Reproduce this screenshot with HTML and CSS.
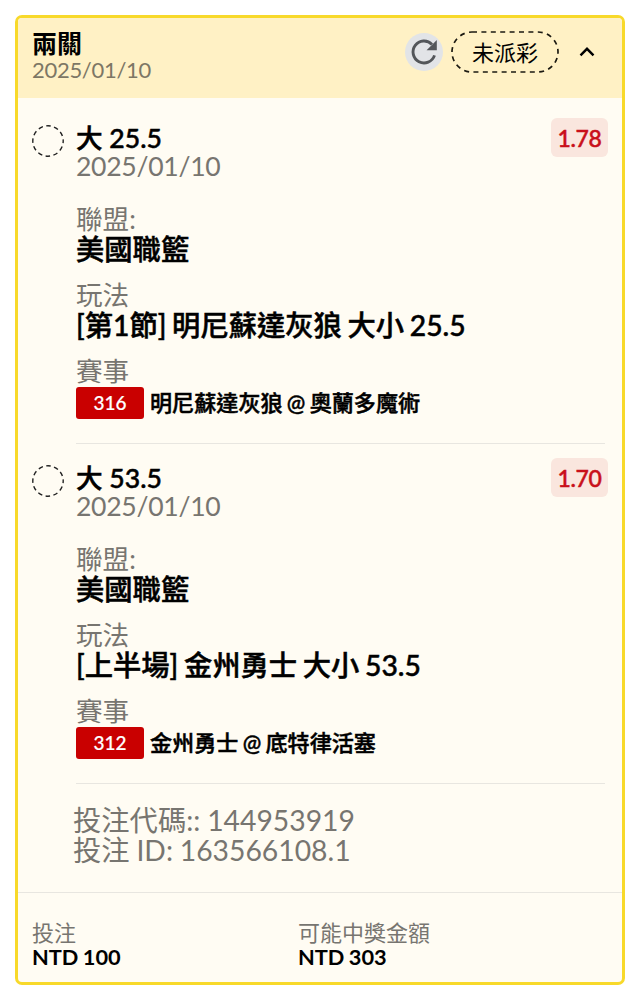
FILE: index.html
```
<!DOCTYPE html>
<html lang="zh-Hant">
<head>
    <meta charset="UTF-8">
    <meta name="viewport" content="width=device-width, initial-scale=1.0">
    <title>投注紀錄</title>
    <link rel="stylesheet" href="styles.css">
</head>
<body>
    <div class="card">
        <div class="card-header">
            <div class="header-text">
                <div class="header-title">兩關</div>
                <div class="header-date">2025/01/10</div>
            </div>
            <div class="header-actions">
                <svg class="refresh" viewBox="0 0 38 38">
                    <circle cx="19" cy="19" r="19" fill="#e2e4e7"/>
                    <path d="M27 11.4 A11 11 0 1 0 29.5 22.4" fill="none" stroke="#53565a" stroke-width="2.9"/>
                    <path d="M31.8 7 V17.2 H21.6 Z" fill="#53565a"/>
                </svg>
                <div class="status">
                    <svg class="status-outline" viewBox="0 0 108 42">
                        <rect x="1" y="1" width="106" height="40" rx="20" fill="none" stroke="#1c1a12" stroke-width="1.7" stroke-dasharray="5 4.4"/>
                    </svg>
                    <span>未派彩</span>
                </div>
                <svg class="chevron" viewBox="0 0 16 12">
                    <path d="M1.5 9.3 L8 2.8 L14.5 9.3" fill="none" stroke="#000" stroke-width="2.4"/>
                </svg>
            </div>
        </div>

        <div class="leg">
            <svg class="leg-status" viewBox="0 0 32 32">
                <circle cx="16" cy="16" r="15.2" fill="none" stroke="#222" stroke-width="1.4" stroke-dasharray="4.6 3.36" stroke-dashoffset="2.3"/>
            </svg>
            <div class="leg-body">
                <div class="leg-top">
                    <div>
                        <div class="pick">大 25.5</div>
                        <div class="leg-date">2025/01/10</div>
                    </div>
                    <div class="odds">1.78</div>
                </div>
                <div class="field">
                    <div class="label">聯盟:</div>
                    <div class="value">美國職籃</div>
                </div>
                <div class="field">
                    <div class="label">玩法</div>
                    <div class="value">[第1節] 明尼蘇達灰狼 大小 25.5</div>
                </div>
                <div class="field">
                    <div class="label">賽事</div>
                    <div class="match"><span class="match-id">316</span>明尼蘇達灰狼 @ 奧蘭多魔術</div>
                </div>
            </div>
        </div>

        <div class="leg">
            <svg class="leg-status" viewBox="0 0 32 32">
                <circle cx="16" cy="16" r="15.2" fill="none" stroke="#222" stroke-width="1.4" stroke-dasharray="4.6 3.36" stroke-dashoffset="2.3"/>
            </svg>
            <div class="leg-body">
                <div class="leg-top">
                    <div>
                        <div class="pick">大 53.5</div>
                        <div class="leg-date">2025/01/10</div>
                    </div>
                    <div class="odds">1.70</div>
                </div>
                <div class="field">
                    <div class="label">聯盟:</div>
                    <div class="value">美國職籃</div>
                </div>
                <div class="field">
                    <div class="label">玩法</div>
                    <div class="value">[上半場] 金州勇士 大小 53.5</div>
                </div>
                <div class="field">
                    <div class="label">賽事</div>
                    <div class="match"><span class="match-id">312</span>金州勇士 @ 底特律活塞</div>
                </div>
            </div>
        </div>

        <div class="codes">
            <div>投注代碼:: 144953919</div>
            <div>投注 ID: 163566108.1</div>
        </div>

        <div class="card-footer">
            <div class="total">
                <div class="total-label">投注</div>
                <div class="total-value">NTD 100</div>
            </div>
            <div class="total">
                <div class="total-label">可能中獎金額</div>
                <div class="total-value">NTD 303</div>
            </div>
        </div>
    </div>
</body>
</html>
```
FILE: styles.css
```
* {
    box-sizing: border-box;
}

body {
    margin: 0;
    padding: 15px 15px 14px;
    background: #fff;
    font-family: Lato, "Noto Sans CJK TC", sans-serif;
    color: #000;
}

.card {
    height: 970px;
    border: 3px solid #f8d92a;
    border-radius: 7px;
    background: #fffcf3;
    overflow: hidden;
    white-space: nowrap;
}

.card-header {
    display: flex;
    justify-content: space-between;
    height: 80px;
    padding: 13px 27px 0 14px;
    background: #fff1c5;
}

.header-title {
    font-size: 25px;
    font-weight: bold;
    line-height: 25px;
}

.header-date {
    font-size: 22px;
    letter-spacing: -0.3px;
    line-height: 27px;
    color: #7d7765;
}

.header-actions {
    display: flex;
    align-items: center;
    height: 42px;
}

.refresh {
    width: 38px;
    height: 38px;
    margin: -1px 8px 0 0;
}

.status {
    position: relative;
    width: 108px;
    padding-top: 2px;
    line-height: 44px;
    font-size: 22px;
    text-align: center;
}

.status-outline {
    position: absolute;
    left: 0;
    top: 2px;
    width: 108px;
    height: 42px;
}

.chevron {
    width: 16px;
    height: 12px;
    margin-left: 20px;
}

.leg {
    display: flex;
    padding: 19.5px 17px 0 14px;
}

.card-header + .leg {
    padding-top: 26px;
}

.leg-status {
    width: 32px;
    height: 32px;
    margin: 1px 12px 0 0;
}

.leg-body {
    flex: 1;
    height: 320px;
    border-bottom: 1.5px solid #e8e6e0;
}

.leg-top {
    display: flex;
    justify-content: space-between;
    height: 80px;
}

.pick,
.value,
.match {
    font-weight: 500;
    -webkit-text-stroke: 0.5px #000;
}

.pick {
    font-size: 26.6px;
    line-height: 28px;
}

.leg-date {
    font-size: 26.6px;
    letter-spacing: -0.3px;
    line-height: 29px;
    color: #777570;
}

.odds {
    width: 57px;
    height: 39px;
    margin: -6px -3px 0 0;
    border-radius: 6px;
    background: #fae6de;
    color: #c9101a;
    font-size: 23px;
    font-weight: 500;
    -webkit-text-stroke: 0.5px #c9101a;
    letter-spacing: -0.4px;
    line-height: 40px;
    text-align: center;
}

.field {
    margin-bottom: 15px;
}

.label {
    font-size: 26.6px;
    line-height: 30px;
    color: #777570;
}

.value {
    font-size: 28.3px;
    word-spacing: -1.5px;
    line-height: 31px;
}

.match {
    display: flex;
    align-items: center;
    margin-top: 1px;
    font-size: 22.1px;
    word-spacing: -1.3px;
    line-height: 32px;
}

.match-id {
    width: 68px;
    height: 32px;
    margin-right: 6px;
    border-radius: 3px;
    background: #c90000;
    color: #fff;
    font-size: 19px;
    -webkit-text-stroke: 0.2px #fff;
    text-align: center;
}

.codes {
    height: 109.5px;
    padding: 21.5px 0 0 55px;
    border-bottom: 1.5px solid #e8e6e0;
    font-size: 28.3px;
    word-spacing: -0.4px;
    line-height: 30px;
    color: #777570;
}

.card-footer {
    display: flex;
    padding: 28px 14px 0;
}

.total {
    width: 266px;
    line-height: 24px;
}

.total-label {
    font-size: 22px;
    color: #777570;
}

.total-value {
    font-size: 21.8px;
    font-weight: bold;
    word-spacing: -1px;
}
```
